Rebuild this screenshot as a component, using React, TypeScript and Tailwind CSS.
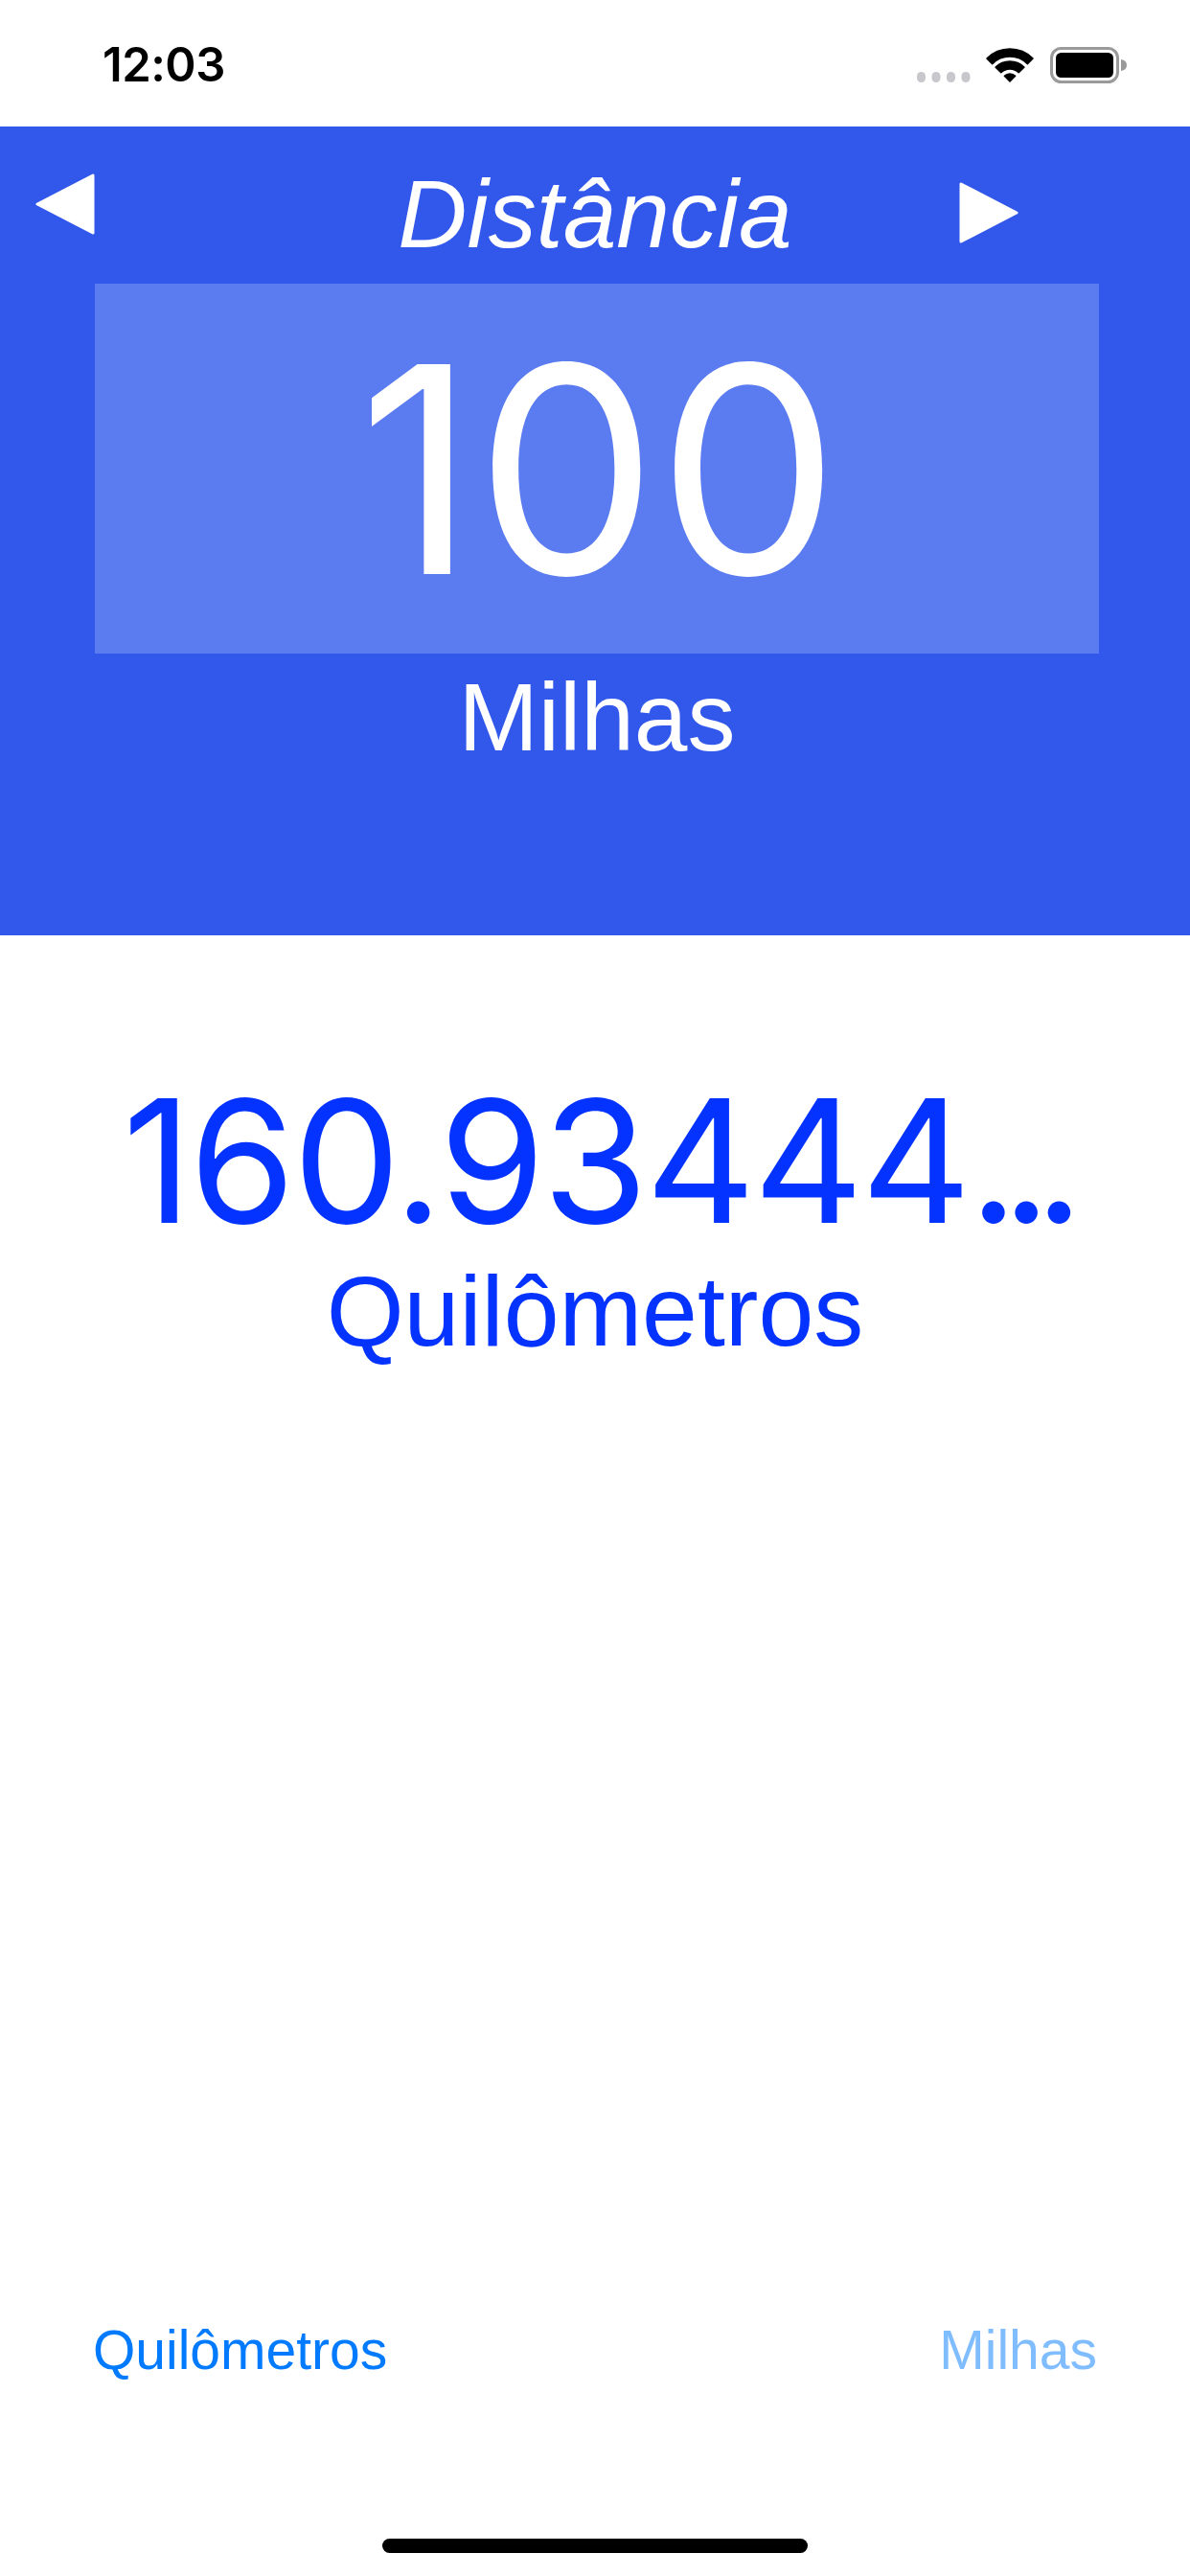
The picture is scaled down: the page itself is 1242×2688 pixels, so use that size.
import React from "react";

const sans = { fontFamily: '"Liberation Sans", Arial, sans-serif' };
const inter = { fontFamily: 'Inter, "Liberation Sans", sans-serif' };

function Wifi() {
  return (
    <svg width="52" height="37" viewBox="0 0 51 37">
      <g fill="#000" stroke="#000" strokeWidth="1.5" strokeLinejoin="round">
        <path d="M1.46 10.96 A34 34 0 0 1 49.54 10.96 L43.88 16.62 A26 26 0 0 0 7.12 16.62 Z" />
        <path d="M10.65 20.15 A21 21 0 0 1 40.35 20.15 L34.69 25.81 A13 13 0 0 0 16.31 25.81 Z" />
        <path d="M19.84 29.34 A8 8 0 0 1 31.16 29.34 L25.5 35 Z" />
      </g>
    </svg>
  );
}

function Battery() {
  return (
    <svg width="82" height="38" viewBox="0 0 82 38">
      <rect x="1.5" y="1.5" width="69" height="35" rx="10" fill="none" stroke="#9a9a9a" strokeWidth="3" />
      <rect x="6" y="6" width="60" height="26" rx="5.5" fill="#000" />
      <path d="M74 13 Q80 14 80 19 Q80 24 74 25 Z" fill="#9a9a9a" />
    </svg>
  );
}

function Dots() {
  return (
    <svg width="56" height="11" viewBox="0 0 56 11">
      {[0, 15.5, 31, 46.5].map((x) => (
        <rect key={x} x={x} y="0" width="9" height="11" rx="4.5" fill="#c7c7cc" />
      ))}
    </svg>
  );
}

function LeftTri() {
  return (
    <svg width="62" height="64" viewBox="0 0 62 64">
      <polygon points="2,32 60,2 60,62" fill="#fff" stroke="#fff" strokeWidth="3" strokeLinejoin="round" />
    </svg>
  );
}

function RightTri() {
  return (
    <svg width="62" height="64" viewBox="0 0 62 64">
      <polygon points="2,2 2,62 60,32" fill="#fff" stroke="#fff" strokeWidth="3" strokeLinejoin="round" />
    </svg>
  );
}

export default function App() {
  return (
    <div className="w-[1242px] h-[2688px] flex flex-col bg-white overflow-hidden" style={sans}>
      {/* status bar */}
      <div className="h-[132px] flex items-start justify-between">
        <div className="ml-[107px] mt-[43px] text-[49px] leading-none font-semibold text-black tracking-[-0.5px]" style={inter}>
          12:03
        </div>
        <div className="mt-[49px] mr-[64px] flex items-end">
          <div className="mb-[1px]">
            <Dots />
          </div>
          <div className="ml-[15px]">
            <Wifi />
          </div>
          <div className="ml-[16px]">
            <Battery />
          </div>
        </div>
      </div>

      {/* blue section */}
      <div className="h-[844px] bg-[#3258eb] flex flex-col pt-[41px]">
        <div className="grid grid-cols-3 h-[100px]">
          <div className="flex items-start">
            <div className="ml-[37px] mt-[8px]">
              <LeftTri />
            </div>
          </div>
          <div className="flex justify-center">
            <span className="text-[100px] leading-none italic text-white whitespace-nowrap">Distância</span>
          </div>
          <div className="flex items-start">
            <div className="ml-[173px] mt-[17px]">
              <RightTri />
            </div>
          </div>
        </div>
        <div className="ml-[99px] w-[1048px]">
          <div className="mt-[23px] h-[386px] bg-[#5b7cf0] pt-[43px] flex justify-center">
            <span className="text-[301px] leading-none text-white font-normal pl-[4px]" style={inter}>
              100
            </span>
          </div>
          <div className="mt-[16px] text-center text-[100px] leading-none text-white">Milhas</div>
        </div>
      </div>

      {/* result */}
      <div className="pt-[147px] flex flex-col items-center text-[#0433ff]">
        <div className="text-[178px] leading-none whitespace-nowrap tracking-[-2.5px]" style={inter}>
          160.93444<span className="tracking-[-17px]">...</span>
        </div>
        <div className="mt-[15px] text-[104px] leading-none">Quilômetros</div>
      </div>

      <div className="flex-1" />

      {/* bottom buttons */}
      <div className="flex justify-between items-start px-[97px]">
        <button className="text-[57px] leading-none text-[#007aff]">Quilômetros</button>
        <button className="text-[57px] leading-none text-[#80bdff]">Milhas</button>
      </div>
      <div className="mt-[168px] mb-[24px] mx-auto w-[444px] h-[15px] rounded-full bg-black" />
    </div>
  );
}
